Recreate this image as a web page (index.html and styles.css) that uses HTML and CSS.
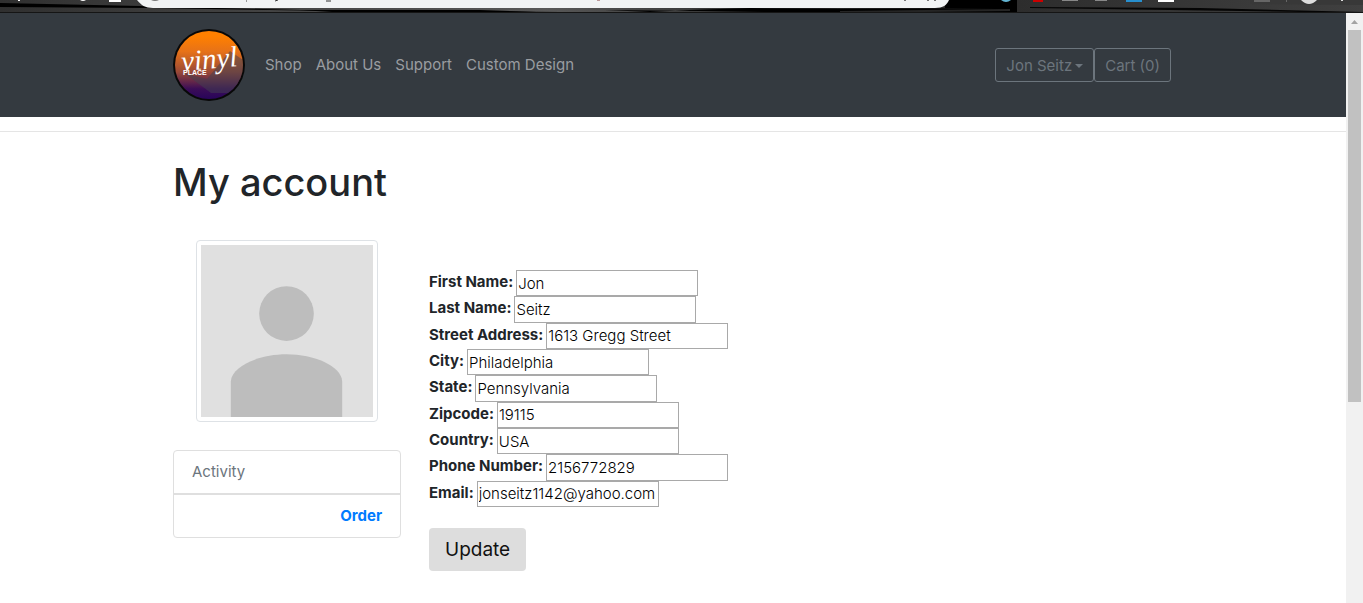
FILE: index.html
```html
<!DOCTYPE html>
<html lang="en">
<head>
<meta charset="utf-8">
<meta name="viewport" content="width=device-width, initial-scale=1">
<title>My account</title>
<link rel="stylesheet" href="styles.css">
</head>
<body>
<svg class="chrome-strip" viewBox="0 0 1363 13" preserveAspectRatio="none" aria-hidden="true">
  <defs><linearGradient id="strip"><stop offset="0" stop-color="#303030"/><stop offset=".4" stop-color="#585858"/><stop offset=".6" stop-color="#222"/><stop offset="1" stop-color="#404040"/></linearGradient></defs>
  <rect width="1363" height="13" fill="url(#strip)"/>
  <path d="M0 3L140 6L300 10L560 12L400 12L150 8L0 7Z" fill="#000"/>
  <path d="M300 10L480 10L550 12.500L340 12.500ZM605 10L650 12L690 10L750 8L840 9L1000 8V0H1017V13H840L700 11Z" fill="#000"/>
  <path d="M945 0H1017V8H945Z" fill="#000"/>
  <path d="M1030 7L1200 8L1363 12V13L1240 11L1030 8Z" fill="#050505"/>
  <path d="M840 11L1010 9V11L840 13Z" fill="#252525"/>
  <path d="M1250 0H1363V5L1250 4Z" fill="#383838"/>
  <path d="M137 0C141 5 145 8 153 8H935C943 8 947 5 949 0Z" fill="#f1f3f4"/>
  <path d="M0 12.500H1363" stroke="#151515"/>
  <path d="M151 0H159Q155 2 151 0M904 0H906V1H904M927 0H929V1H927M934 0H936V1H934" fill="#777"/>
  <path d="M246 0H247V2H246" fill="#999"/>
  <path d="M275 1L278 0M326 1H331" stroke="#333"/>
  <path d="M597 0H600V1H597" fill="#b99"/>
  <path d="M18 0H20V1H18M80 0H86Q83 2 80 0M109 0H121V2H109M1158 0H1174V2H1158" fill="#fff"/>
  <path d="M1001 0H1011Q1006 4 1001 0" fill="#63b5d4"/>
  <path d="M1033 0H1043V2H1033" fill="#c00"/>
  <path d="M1062 0H1078V1H1062M1095 0H1107V1H1095" fill="#888"/>
  <path d="M1126 0H1142V2H1126" fill="#278fce"/>
  <path d="M1254 0H1270V2H1254M1286 0H1287V2H1286" fill="#666"/>
  <path d="M1301 0H1317Q1309 8 1301 0M1341 0H1343V1H1341" fill="#ddd"/>
</svg>
<div class="viewport">
  <div class="page">
    <header class="navbar">
      <div class="container navbar-inner">
        <a class="brand" href="#" aria-label="Vinyl Place home">
          <svg viewBox="0 0 72 72">
            <defs>
              <linearGradient id="sunset" x1="0" y1="0" x2="0" y2="1"><stop offset=".08" stop-color="#ff8000"/><stop offset=".3" stop-color="#e77218"/><stop offset=".6" stop-color="#9a4936"/><stop offset=".85" stop-color="#3b0d57"/><stop offset="1" stop-color="#28045a"/></linearGradient>
              <clipPath id="disc"><circle cx="36" cy="36" r="34"/></clipPath>
            </defs>
            <circle cx="36" cy="36" r="36" fill="#080808"/>
            <circle cx="36" cy="36" r="34" fill="url(#sunset)"/>
            <path d="M57 22L80 38V64H38L11 44L34 50Z" fill="#424150" fill-opacity=".5" clip-path="url(#disc)"/>
            <text class="brand-script" x="9" y="42" transform="rotate(-5 9 42)">vinyl</text>
            <text class="brand-small" x="10" y="46">PLACE</text>
          </svg>
        </a>
        <nav class="nav-links">
          <a href="#">Shop</a>
          <a href="#">About Us</a>
          <a href="#">Support</a>
          <a href="#">Custom Design</a>
        </nav>
        <div class="nav-actions">
          <button class="nav-button dropdown" type="button">Jon Seitz</button>
          <button class="nav-button" type="button">Cart (0)</button>
        </div>
      </div>
    </header>
    <hr class="divider">
    <main class="container">
      <h1 class="title">My account</h1>
      <div class="account">
        <aside class="sidebar">
          <svg class="avatar" viewBox="0 0 173 173" role="img" aria-label="Profile picture">
            <rect width="173" height="173" fill="#e0e0e0"/>
            <circle cx="86" cy="69" r="27.500" fill="#bdbdbd"/>
            <path d="M30 173V137C31 122 58 110 86 110S141 122 142 137V173Z" fill="#bdbdbd"/>
          </svg>
          <ul class="activity">
            <li class="activity-head">Activity</li>
            <li class="activity-row"><a href="#">Order</a></li>
          </ul>
        </aside>
        <form class="details">
          <div class="fields">
            <div class="field"><label for="first">First Name:</label><input id="first" type="text" value="Jon"></div>
            <div class="field"><label for="last">Last Name:</label><input id="last" type="text" value="Seitz"></div>
            <div class="field"><label for="street">Street Address:</label><input id="street" type="text" value="1613 Gregg Street"></div>
            <div class="field"><label for="city">City:</label><input id="city" type="text" value="Philadelphia"></div>
            <div class="field"><label for="state">State:</label><input id="state" type="text" value="Pennsylvania"></div>
            <div class="field"><label for="zip">Zipcode:</label><input id="zip" type="text" value="19115"></div>
            <div class="field"><label for="country">Country:</label><input id="country" type="text" value="USA"></div>
            <div class="field"><label for="phone">Phone Number:</label><input id="phone" type="text" value="2156772829"></div>
            <div class="field"><label for="email">Email:</label><input id="email" type="text" value="jonseitz1142@yahoo.com"></div>
          </div>
          <button class="update" type="button">Update</button>
        </form>
      </div>
    </main>
  </div>
  <div class="scrollbar" aria-hidden="true">
    <svg class="scroll-arrow" viewBox="0 0 17 17"><path d="M5 11L8.500 7L12 11Z" fill="#a3a3a3"/></svg>
    <div class="scroll-thumb"></div>
  </div>
</div>
</body>
</html>
```
FILE: styles.css
```css
* { box-sizing: border-box; }

body {
  margin: 0;
  min-height: 100vh;
  display: flex;
  flex-direction: column;
  background: #fff;
  color: #212529;
  font: 15px/24px Inter, "Open Sans", sans-serif;
}

button, input { font-family: inherit; }
a { text-decoration: none; }

.chrome-strip { display: block; flex: none; width: 100%; height: 13px; }
.viewport { flex: 1; display: flex; }
.page { flex: 1; min-width: 0; }
.container { width: 100%; max-width: 1000px; margin: 0 auto; }

.navbar { background: #343a40; padding: 16px 0; }
.navbar-inner { display: flex; align-items: center; }
.brand { width: 72px; height: 72px; margin-right: 20px; }
.brand svg { display: block; width: 100%; height: 100%; }
.brand-script { font: italic 29px "Liberation Serif", cursive; fill: #fff; }
.brand-small { font: bold 7px "Liberation Sans", sans-serif; fill: #fff; }

.nav-links { display: flex; gap: 14px; }
.nav-links a { color: #9a9da0; }

.nav-actions { display: flex; margin-left: auto; padding-right: 2px; }
.nav-button {
  height: 34px;
  padding: 0 10px;
  border: 1px solid #6c757d;
  border-radius: 3px;
  background: transparent;
  color: #6c757d;
  font-size: 15px;
}
.dropdown::after {
  content: "";
  display: inline-block;
  margin-left: 3px;
  vertical-align: 3px;
  border: 4px solid transparent;
  border-top-color: currentColor;
  border-bottom: 0;
}

.divider { margin: 14px 0 0; border: 0; border-top: 1px solid #e5e5e5; }
.title { margin: 25px 0 33px; font-size: 38px; line-height: 50px; font-weight: 500; }

.account { display: flex; align-items: flex-start; gap: 28px; }
.sidebar { width: 228px; }
.avatar {
  display: block;
  width: 182px;
  height: 182px;
  margin: 0 auto 28px;
  padding: 4px;
  border: 1px solid #dee2e6;
  border-radius: 4px;
}
.activity {
  margin: 0;
  padding: 0;
  list-style: none;
  border: 1px solid #dfdfdf;
  border-radius: 4px;
}
.activity li { padding: 9px 18px; }
.activity-head { color: #6c757d; border-bottom: 2px solid #dfdfdf; }
.activity-row { text-align: right; }
.activity a { color: #007bff; font-weight: 700; }

.details { padding-top: 30px; }
.fields { display: grid; grid-auto-rows: 1fr; min-height: 237px; }
.field { display: flex; gap: 3px; }
.field label { font-weight: 700; white-space: nowrap; }
.field input {
  width: 182px;
  padding: 0 1px;
  border: 1px solid #a9a9a9;
  border-radius: 0;
  background: #fff;
  color: #000;
  font-size: 15px;
  font-weight: 300;
}
.update {
  height: 43px;
  margin-top: 21px;
  padding: 0 16px;
  border: 0;
  border-radius: 4px;
  background: #ddd;
  color: #111;
  font-size: 19px;
}

.scrollbar { flex: none; width: 17px; display: flex; flex-direction: column; background: #f1f1f1; }
.scroll-arrow { width: 17px; height: 17px; }
.scroll-thumb { height: 63%; margin: 0 2px; background: #c1c1c1; }
```
